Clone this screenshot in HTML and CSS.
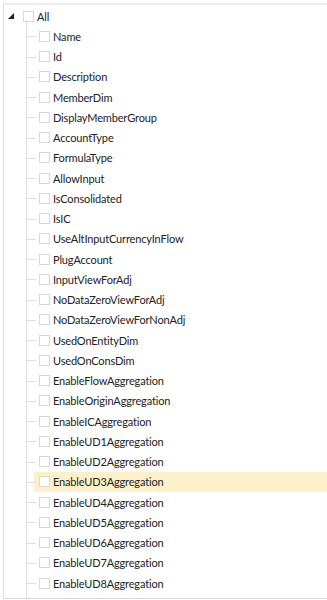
FILE: index.html
```html
<!DOCTYPE html>
<html>
<head>
  <title>Properties</title>
  <link rel="stylesheet" href="styles.css">
</head>
<body>
  <div class="panel">
    <div class="tree">
      <div class="node root">
        <span class="expander"></span>
        <span class="check"></span>
        <span class="label">All</span>
      </div>
      <ul class="children">
        <li class="node"><span class="check"></span><span class="label">Name</span></li>
        <li class="node"><span class="check"></span><span class="label">Id</span></li>
        <li class="node"><span class="check"></span><span class="label">Description</span></li>
        <li class="node"><span class="check"></span><span class="label">MemberDim</span></li>
        <li class="node"><span class="check"></span><span class="label">DisplayMemberGroup</span></li>
        <li class="node"><span class="check"></span><span class="label">AccountType</span></li>
        <li class="node"><span class="check"></span><span class="label">FormulaType</span></li>
        <li class="node"><span class="check"></span><span class="label">AllowInput</span></li>
        <li class="node"><span class="check"></span><span class="label">IsConsolidated</span></li>
        <li class="node"><span class="check"></span><span class="label">IsIC</span></li>
        <li class="node"><span class="check"></span><span class="label">UseAltInputCurrencyInFlow</span></li>
        <li class="node"><span class="check"></span><span class="label">PlugAccount</span></li>
        <li class="node"><span class="check"></span><span class="label">InputViewForAdj</span></li>
        <li class="node"><span class="check"></span><span class="label">NoDataZeroViewForAdj</span></li>
        <li class="node"><span class="check"></span><span class="label">NoDataZeroViewForNonAdj</span></li>
        <li class="node"><span class="check"></span><span class="label">UsedOnEntityDim</span></li>
        <li class="node"><span class="check"></span><span class="label">UsedOnConsDim</span></li>
        <li class="node"><span class="check"></span><span class="label">EnableFlowAggregation</span></li>
        <li class="node"><span class="check"></span><span class="label">EnableOriginAggregation</span></li>
        <li class="node"><span class="check"></span><span class="label">EnableICAggregation</span></li>
        <li class="node"><span class="check"></span><span class="label">EnableUD1Aggregation</span></li>
        <li class="node"><span class="check"></span><span class="label">EnableUD2Aggregation</span></li>
        <li class="node selected"><span class="check"></span><span class="label">EnableUD3Aggregation</span></li>
        <li class="node"><span class="check"></span><span class="label">EnableUD4Aggregation</span></li>
        <li class="node"><span class="check"></span><span class="label">EnableUD5Aggregation</span></li>
        <li class="node"><span class="check"></span><span class="label">EnableUD6Aggregation</span></li>
        <li class="node"><span class="check"></span><span class="label">EnableUD7Aggregation</span></li>
        <li class="node"><span class="check"></span><span class="label">EnableUD8Aggregation</span></li>
        <li class="node"><span class="check"></span></li>
      </ul>
    </div>
  </div>
</body>
</html>
```

FILE: styles.css
```css
:root {
  --line-color: #dcdcdc;
  --check-border: #d8d8d8;
  --text-color: #222;
  --selected-color: #fdf1cb;
}

html, body {
  margin: 0;
  padding: 0;
  background: #fff;
}

body {
  font-family: Lato, "Noto Sans", sans-serif;
  font-size: 11px;
  letter-spacing: -0.15px;
  color: var(--text-color);
}

.panel {
  margin: 3px 0 0 3px;
  height: 594px;
  border-left: 1px solid #e0e0e0;
  border-top: 1px solid #e8e8e8;
  border-bottom: 1px solid #d8d8d8;
  box-shadow: inset 0 1px 1px rgba(0,0,0,0.06);
  overflow: hidden;
}

.tree {
  padding-top: 2px;
}

.node {
  display: flex;
  align-items: center;
  height: 20.25px;
}

.root {
  padding-left: 4px;
}

.expander {
  width: 0;
  height: 0;
  margin-right: 9px;
  border-left: 6px solid transparent;
  border-bottom: 6px solid #222;
}

.check {
  width: 9px;
  height: 9px;
  border: 1px solid var(--check-border);
  background: #fff;
  margin-right: 3px;
  flex-shrink: 0;
}

.children {
  list-style: none;
  margin: 0;
  padding: 0;
  position: relative;
}

/* vertical guide line */
.children:before {
  content: "";
  position: absolute;
  left: 22px;
  top: -6px;
  bottom: 0;
  border-left: 1px solid var(--line-color);
}

.children .node {
  position: relative;
  padding-left: 35px;
}

/* horizontal connector */
.children .node:before {
  content: "";
  position: absolute;
  left: 23px;
  width: 9px;
  top: 50%;
  border-top: 1px solid var(--line-color);
}

.children .selected {
  background: linear-gradient(to right, transparent 30px, var(--selected-color) 30px);
}

.label {
  white-space: nowrap;
}
```
